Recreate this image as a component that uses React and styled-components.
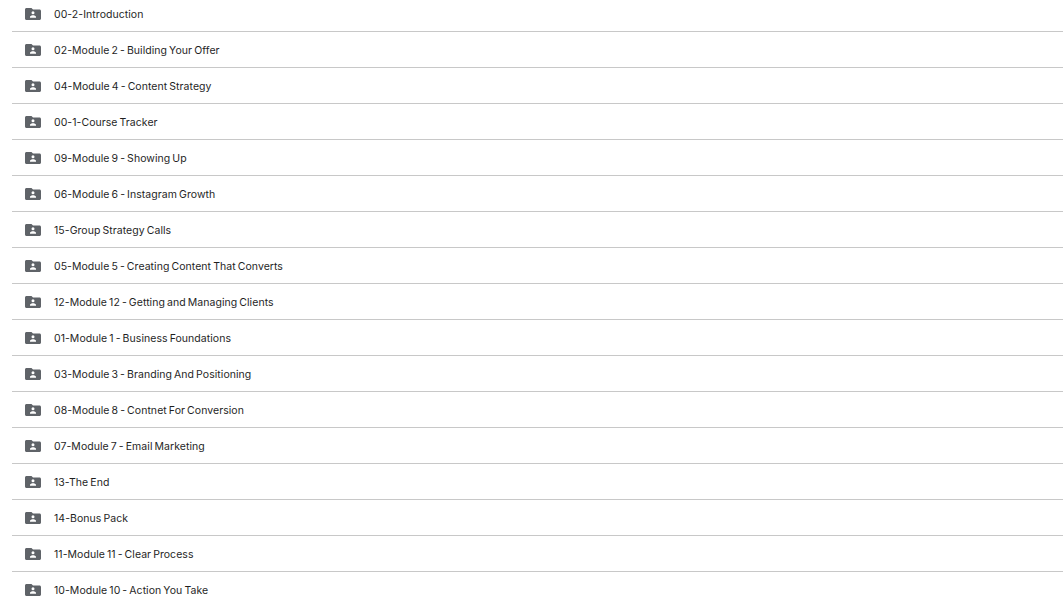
import React from "react";
import styled, { createGlobalStyle } from "styled-components";

const folders = [
  "00-2-Introduction",
  "02-Module 2 - Building Your Offer",
  "04-Module 4 - Content Strategy",
  "00-1-Course Tracker",
  "09-Module 9 - Showing Up",
  "06-Module 6 - Instagram Growth",
  "15-Group Strategy Calls",
  "05-Module 5 - Creating Content That Converts",
  "12-Module 12 - Getting and Managing Clients",
  "01-Module 1 - Business Foundations",
  "03-Module 3 - Branding And Positioning",
  "08-Module 8 - Contnet For Conversion",
  "07-Module 7 - Email Marketing",
  "13-The End",
  "14-Bonus Pack",
  "11-Module 11 - Clear Process",
  "10-Module 10 - Action You Take",
];

const GlobalStyle = createGlobalStyle`
  html, body {
    margin: 0;
    height: 100%;
    overflow: hidden;
    background: #fff;
  }
`;

const FolderIcon = () => (
  <Icon viewBox="0 0 16 12" aria-hidden="true">
    <path
      fill="#5f6368"
      fillRule="evenodd"
      d="M1.500 0H6.500l1.500 1.500h6.500c.8 0 1.500.7 1.500 1.500v7.500c0 .8-.7 1.500-1.500 1.500h-13C.7 12 0 11.300 0 10.500V1.500C0 .7.7 0 1.500 0zM8 3.300a1.500 1.500 0 1 0 0 3 1.500 1.500 0 0 0 0-3zM5 9.700h6V8.800C11 7.700 9.200 7.200 8 7.200s-3 .5-3 1.600z"
    />
  </Icon>
);

const App = () => {
  return (
    <Wrapper>
      <GlobalStyle />
      {folders.map((name) => (
        <Row key={name}>
          <FolderIcon />
          <Name>{name}</Name>
        </Row>
      ))}
    </Wrapper>
  );
};

const Wrapper = styled.div`
  margin-top: -4px;
  padding-left: 12px;
  font-family: Inter, Roboto, "Liberation Sans", sans-serif;
`;

const Row = styled.div`
  box-sizing: border-box;
  height: 36px;
  display: flex;
  align-items: center;
  gap: 13px;
  padding-left: 13px;
  border-bottom: 1px solid #c8c8c8;

  &:last-child {
    border-bottom-color: transparent;
  }
`;

const Icon = styled.svg`
  width: 16px;
  height: 12px;
  margin-top: 1px;
  flex-shrink: 0;
`;

const Name = styled.span`
  font-size: 10.5px;
  line-height: 16px;
  padding-top: 2px;
  letter-spacing: 0.05px;
  word-spacing: -0.95px;
  color: #1f1f1f;
  white-space: nowrap;
`;

export default App;
